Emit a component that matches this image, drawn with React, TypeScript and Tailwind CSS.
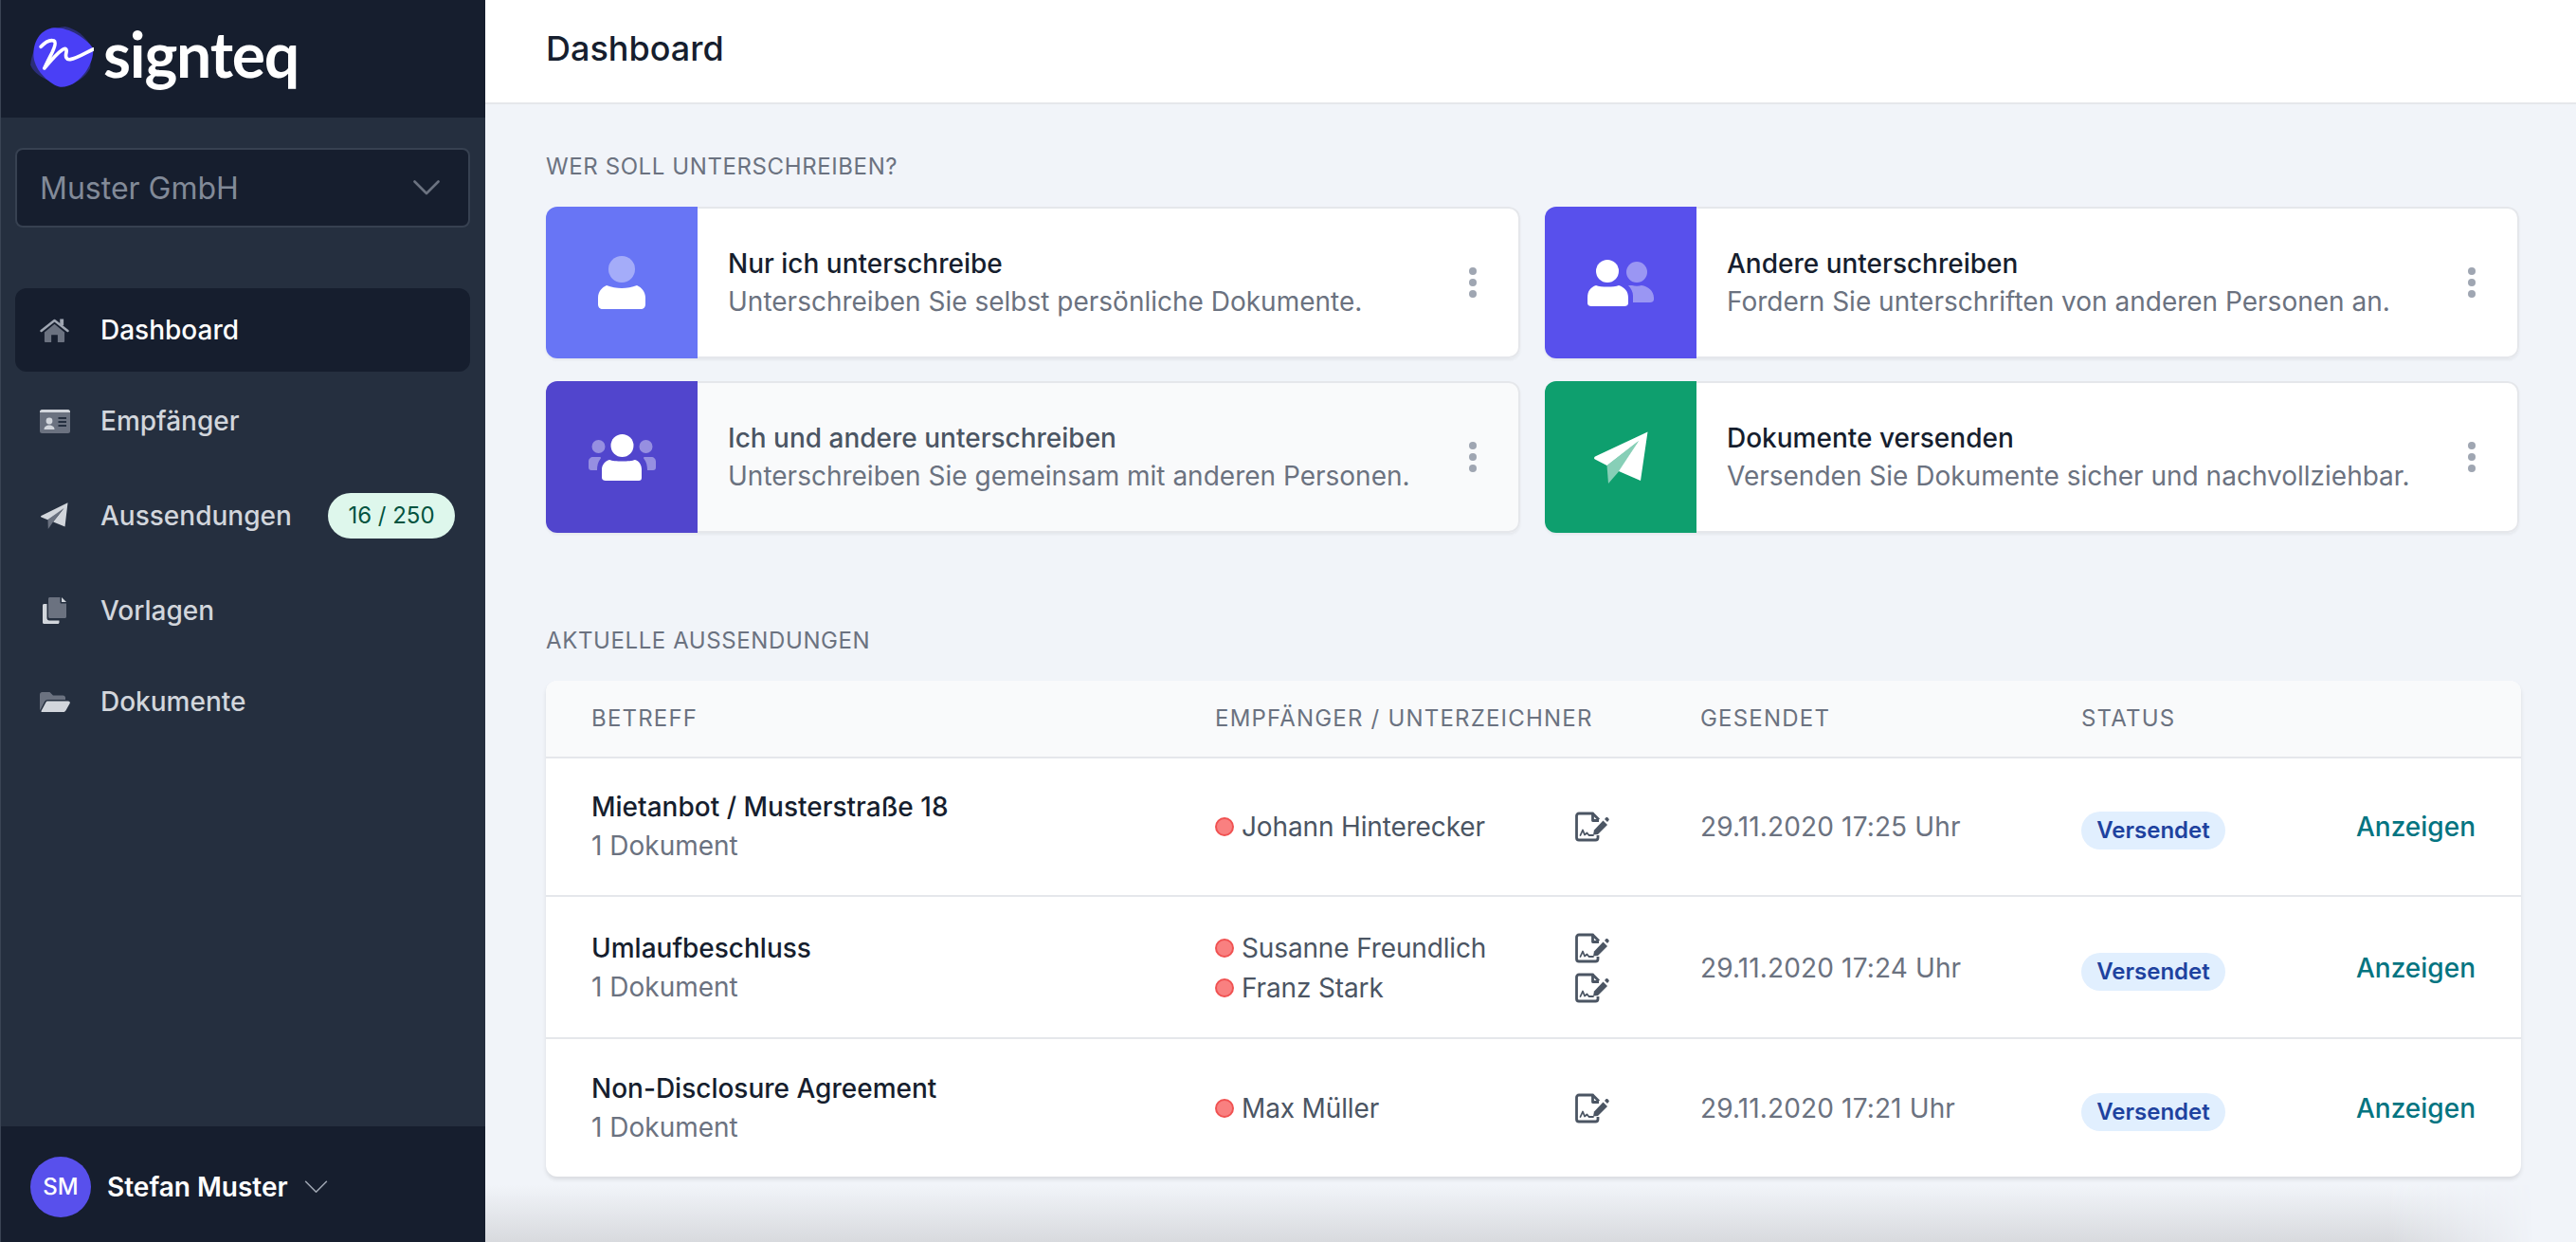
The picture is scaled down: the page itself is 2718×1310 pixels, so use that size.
import React from "react";

const font = { fontFamily: "Inter, 'Liberation Sans', sans-serif" };

function Logo() {
  return (
    <div className="flex items-center">
      <svg viewBox="96 84 200 192" className="w-[67px] h-[64px] shrink-0">
        <path d="M205 84C240 90 270 115 290 150L285 215C270 245 240 262 215 270C170 265 110 245 96 205C100 150 140 90 205 84Z" fill="#2b2d78" />
        <path d="M170 88C215 85 270 120 292 150C300 170 285 210 265 235C240 265 215 277 190 275C160 270 110 225 106 180C102 130 130 92 170 88Z" fill="#4a3ff6" />
        <path d="M129 148C142 134 158 125 170 129C178 133 172 150 165 165C156 183 147 200 140 216C160 192 178 170 196 158C208 150 212 156 209 168C206 180 210 190 222 188C245 184 272 166 294 156" fill="none" stroke="#fff" strokeWidth="11" strokeLinecap="round" strokeLinejoin="round" />
      </svg>
      <span className="ml-[10px] text-[66px] leading-none font-bold text-white tracking-[-0.018em] -mt-[6px]" style={{ fontFamily: "Lato, sans-serif" }}>
        signteq
      </span>
    </div>
  );
}

function HomeIcon() {
  return (
    <svg viewBox="0 0 32 26" className="w-[31px] h-[25px]">
      <path d="M1.5 13.5L16 2L30.5 13.5" fill="none" stroke="#9fa6b2" strokeWidth="2.6" strokeLinecap="round" strokeLinejoin="round" />
      <rect x="22" y="0.5" width="4" height="7" fill="#9fa6b2" />
      <path d="M5 15L16 6L27 15V25C27 25.6 26.6 26 26 26H19.5V18H12.5V26H6C5.4 26 5 25.6 5 25Z" fill="#6b7280" />
    </svg>
  );
}

function CardIcon() {
  return (
    <svg viewBox="0 0 32 25" className="w-[32px] h-[25px]">
      <rect width="32" height="25" rx="2.5" fill="#6b7280" />
      <path d="M2.5 0H29.5C30.9 0 32 1.1 32 2.5V3H0V2.5C0 1.1 1.1 0 2.5 0Z" fill="#d2d6dc" />
      <circle cx="10" cy="12" r="3.4" fill="#d2d6dc" />
      <path d="M4.5 21C4.5 18 7 16.5 10 16.5C13 16.5 15.5 18 15.5 21Z" fill="#d2d6dc" />
      <path d="M19.5 9H28M19.5 13H28M19.5 17H28" stroke="#252f3f" strokeWidth="1.8" />
    </svg>
  );
}

function PlaneIcon() {
  return (
    <svg viewBox="0 0 29 28" className="w-[29px] h-[28px] ml-[1px]">
      <path d="M7.5 18.2L24 6L13 20.5L7.8 28Z" fill="#6b7280" />
      <path d="M28.5 0.3L25.5 25.5L13.2 20.5L24.5 6L7.3 18.2L0.6 15.5C-0.1 15.2 -0.2 14.4 0.5 14Z" fill="#d2d6dc" />
    </svg>
  );
}

function CopyIcon() {
  return (
    <svg viewBox="0 0 25 28" className="w-[25px] h-[28px] ml-[3px]">
      <path d="M0 8.5C0 7.7 0.7 7 1.5 7H4.5V22C4.5 23.3 5.6 24.5 7 24.5H17.5V26.5C17.5 27.3 16.8 28 16 28H1.5C0.7 28 0 27.3 0 26.5Z" fill="#d2d6dc" />
      <path d="M7.5 0H18.5V5.5C18.5 6 19 6.5 19.5 6.5H25V20.5C25 21.3 24.3 22 23.5 22H7.5C6.7 22 6 21.3 6 20.5V1.5C6 0.7 6.7 0 7.5 0Z" fill="#6b7280" />
      <path d="M20 0L25 5H20Z" fill="#d2d6dc" />
    </svg>
  );
}

function FolderIcon() {
  return (
    <svg viewBox="0 0 32 21" className="w-[32px] h-[21px]">
      <path d="M0 2.5C0 1.1 1.1 0 2.5 0H10.5L14 3.5H24.5C25.9 3.5 27 4.6 27 6V8H8.5C7 8 5.8 8.8 5.1 10.1L0.5 19C0.2 18.7 0 18.2 0 17.7Z" fill="#6b7280" />
      <path d="M8.5 9.5H30C31.4 9.5 32.3 10.9 31.6 12.1L27.4 19.5C26.9 20.4 26 21 25 21H2C1 21 1.6 19.8 2 19L6.4 10.7C6.8 10 7.6 9.5 8.5 9.5Z" fill="#d2d6dc" />
    </svg>
  );
}

function Chevron({ className, stroke, width }: { className: string; stroke: string; width: number }) {
  return (
    <svg viewBox="0 0 28 16" className={className} fill="none">
      <path d="M1.5 1.5L14 14L26.5 1.5" stroke={stroke} strokeWidth={width} strokeLinecap="round" strokeLinejoin="round" />
    </svg>
  );
}

function DocSign() {
  return (
    <svg viewBox="0 0 36 32" className="w-[36px] h-[32px] shrink-0">
      <path d="M25 9.5H18.5V2H4C2.6 2 1.5 3.1 1.5 4.5V27.5C1.5 28.9 2.6 30 4 30H21.5C22.9 30 24 28.9 24 27.5V25" fill="none" stroke="#4b5563" strokeWidth="2.8" strokeLinejoin="round" />
      <path d="M18.5 2L25 8.5" fill="none" stroke="#4b5563" strokeWidth="2.8" />
      <path d="M5.5 25L8 19.5L10 24.5L12.5 22.5L14.5 25H19" fill="none" stroke="#4b5563" strokeWidth="1.8" strokeLinecap="round" strokeLinejoin="round" />
      <path d="M19 24.5L20 19.5L29.5 9.5L34 14L24 24Z" fill="#4b5563" />
      <path d="M31 8L32.5 6.3C33 5.8 33.8 5.8 34.3 6.3L35.4 7.4C35.9 7.9 35.9 8.7 35.4 9.2L34 11L31 8Z" fill="#4b5563" />
    </svg>
  );
}

function PersonIcon() {
  return (
    <svg viewBox="0 0 50 56" className="w-[50px] h-[56px]">
      <circle cx="25" cy="14" r="14" fill="#fff" fillOpacity="0.4" />
      <path d="M9 31C14 33 20 34 25 34C30 34 36 33 41 31C46 33 50 38 50 44V51C50 54 48 56 45 56H5C2 56 0 54 0 51V44C0 38 4 33 9 31Z" fill="#fff" />
    </svg>
  );
}

function TwoPeopleIcon() {
  return (
    <svg viewBox="0 0 70 49" className="w-[70px] h-[49px]">
      <circle cx="52" cy="13" r="11" fill="#fff" fillOpacity="0.4" />
      <path d="M47 27C50 28 54 28 57 27C64 28 70 33 70 40V42C70 44 68 45 66 45H48V38C48 34 46 30 43 27Z" fill="#fff" fillOpacity="0.4" />
      <circle cx="21" cy="12" r="12" fill="#fff" />
      <path d="M9 27C14 29 28 29 33 27C39 29 43 33 43 40V46C43 48 41 49 39 49H4C2 49 0 48 0 46V40C0 33 3 29 9 27Z" fill="#fff" />
    </svg>
  );
}

function GroupIcon() {
  return (
    <svg viewBox="0 0 71 49" className="w-[71px] h-[49px]">
      <circle cx="10.5" cy="13" r="7" fill="#fff" fillOpacity="0.4" />
      <circle cx="60.5" cy="13" r="7" fill="#fff" fillOpacity="0.4" />
      <path d="M5 24H12C13 24 13.5 25 12.5 26C10 29 9 33 9 38H3C1 38 0 37 0 35V29C0 26 2 24 5 24Z" fill="#fff" fillOpacity="0.4" />
      <path d="M66 24H59C58 24 57.5 25 58.5 26C61 29 62 33 62 38H68C70 38 71 37 71 35V29C71 26 69 24 66 24Z" fill="#fff" fillOpacity="0.4" />
      <circle cx="35.5" cy="12" r="12" fill="#fff" />
      <path d="M22 27C27 29 44 29 49 27C53 28 56 32 56 37V46C56 48 55 49 53 49H18C16 49 14 48 14 46V37C14 32 18 28 22 27Z" fill="#fff" />
    </svg>
  );
}

function SendIcon() {
  return (
    <svg viewBox="0 0 57 55" className="w-[57px] h-[55px]">
      <path d="M13.5 36L47 10L28 40L15 55L13.5 36Z" fill="#fff" fillOpacity="0.5" />
      <path d="M56.5 0.5L49 52L26 42L47 10L13.5 36L1 29.5C-0.3 28.8 -0.3 27.6 1 26.5Z" fill="#fff" />
    </svg>
  );
}

function Dots() {
  return (
    <div className="flex flex-col gap-[4px] w-[8px]">
      <div className="h-[8px] w-[8px] rounded-full bg-[#9fa6b2]" />
      <div className="h-[8px] w-[8px] rounded-full bg-[#9fa6b2]" />
      <div className="h-[8px] w-[8px] rounded-full bg-[#9fa6b2]" />
    </div>
  );
}

const nav = [
  { label: "Empfänger", icon: <CardIcon />, h: "h-[96px]" },
  { label: "Aussendungen", icon: <PlaneIcon />, h: "h-[104px]", badge: "16 / 250" },
  { label: "Vorlagen", icon: <CopyIcon />, h: "h-[96px]" },
  { label: "Dokumente", icon: <FolderIcon />, h: "h-[96px]" },
];

const cards = [
  { title: "Nur ich unterschreibe", desc: "Unterschreiben Sie selbst persönliche Dokumente.", color: "bg-[#6875f5]", icon: <PersonIcon /> },
  { title: "Andere unterschreiben", desc: "Fordern Sie unterschriften von anderen Personen an.", color: "bg-[#5850ec]", icon: <TwoPeopleIcon /> },
  { title: "Ich und andere unterschreiben", desc: "Unterschreiben Sie gemeinsam mit anderen Personen.", color: "bg-[#5145cd]", icon: <GroupIcon />, muted: true },
  { title: "Dokumente versenden", desc: "Versenden Sie Dokumente sicher und nachvollziehbar.", color: "bg-[#0e9f6e]", icon: <SendIcon /> },
];

const rows = [
  { subject: "Mietanbot / Musterstraße 18", names: ["Johann Hinterecker"], date: "29.11.2020 17:25 Uhr", h: "h-[146px]" },
  { subject: "Umlaufbeschluss", names: ["Susanne Freundlich", "Franz Stark"], date: "29.11.2020 17:24 Uhr", h: "h-[150px] pt-[2px]" },
  { subject: "Non-Disclosure Agreement", names: ["Max Müller"], date: "29.11.2020 17:21 Uhr", h: "h-[145px]" },
];

export default function App() {
  return (
    <div className="relative flex h-[1310px] w-[2718px] overflow-hidden bg-[#f1f4f9]" style={font}>
      <div className="absolute inset-y-0 left-0 w-px bg-[#3a4454]" />
      <aside className="flex w-[512px] shrink-0 flex-col bg-[#252f3f]">
        <div className="flex h-[124px] items-start bg-[#161e2e] pl-[32px] pt-[28px]">
          <Logo />
        </div>
        <div className="px-[16px] pt-[32px]">
          <div className="flex h-[84px] items-center justify-between rounded-[8px] border-2 border-[#374151] bg-[#161e2e] pl-[24px] pr-[30px]">
            <span className="mt-[2px] text-[32px] text-[#828a98]">Muster GmbH</span>
            <Chevron className="w-[28px] h-[16px]" stroke="#6b7280" width={2.6} />
          </div>
        </div>
        <nav className="flex flex-1 flex-col px-[16px] pt-[64px]">
          <div className="mb-[4px] flex h-[88px] items-center rounded-[12px] bg-[#161e2e] pl-[26px]">
            <span className="flex w-[64px] shrink-0"><HomeIcon /></span>
            <span className="text-[28px] font-[450] text-white">Dashboard</span>
          </div>
          {nav.map((item) => (
            <div key={item.label} className={`flex ${item.h} items-center pl-[26px] pr-[16px]`}>
              <span className="flex w-[64px] shrink-0 justify-start">{item.icon}</span>
              <span className="text-[28px] font-[450] text-[#d2d6dc]">{item.label}</span>
              {item.badge && (
                <span className="ml-auto flex h-[48px] w-[134px] items-center justify-center rounded-full bg-[#def7ec] text-[24px] text-[#03543f]">
                  {item.badge}
                </span>
              )}
            </div>
          ))}
        </nav>
        <div className="flex h-[122px] items-center bg-[#161e2e] pl-[32px] pt-[6px]">
          <div className="flex h-[64px] w-[64px] items-center justify-center rounded-full bg-[#5850ec] text-[24px] font-medium text-white">SM</div>
          <span className="ml-[17px] text-[28px] font-semibold text-white">Stefan Muster</span>
          <Chevron className="ml-[17px] w-[25px] h-[14px]" stroke="#9fa6b2" width={1.8} />
        </div>
      </aside>

      <main className="flex min-w-0 flex-1 flex-col">
        <header className="flex h-[110px] shrink-0 items-center border-b-2 border-[#e5e7eb] bg-white pl-[64px]">
          <h1 className="-mt-[6px] text-[36px] font-[450] text-[#161e2e]">Dashboard</h1>
        </header>
        <div className="pl-[64px] pr-[58px]">
          <h2 className="mt-[50px] text-[24px] leading-[32px] tracking-[0.025em] text-[#6b7280]">WER SOLL UNTERSCHREIBEN?</h2>
          <div className="mt-[26px] grid grid-cols-2 gap-x-[26px] gap-y-[24px] pr-[2px]">
            {cards.map((card) => (
              <div key={card.title} className="flex h-[160px] overflow-hidden rounded-[12px] shadow-[0_2px_3px_rgba(0,0,0,0.05)]">
                <div className={`flex w-[160px] shrink-0 items-center justify-center ${card.color}`}>{card.icon}</div>
                <div className={`flex flex-1 items-center justify-between rounded-r-[12px] border-2 border-l-0 border-[#e5e7eb] pl-[32px] pr-[44px] ${card.muted ? "bg-[#f9fafb]" : "bg-white"}`}>
                  <div className="flex flex-col">
                    <span className={`text-[28px] leading-[40px] font-[450] ${card.muted ? "text-[#4b5563]" : "text-[#161e2e]"}`}>{card.title}</span>
                    <span className="text-[28px] leading-[40px] text-[#6b7280]">{card.desc}</span>
                  </div>
                  <Dots />
                </div>
              </div>
            ))}
          </div>

          <h2 className="mt-[98px] text-[24px] leading-[32px] tracking-[0.025em] text-[#6b7280]">AKTUELLE AUSSENDUNGEN</h2>
          <div className="mt-[26px] overflow-hidden rounded-[12px] bg-white shadow-[0_3px_4px_rgba(0,0,0,0.1)]">
            <div className="grid h-[82px] grid-cols-[706px_512px_402px_1fr] items-center border-b-2 border-[#e5e7eb] bg-[#f9fafb] text-[24px] tracking-[0.05em] text-[#6b7280]">
              <span className="pl-[48px]">BETREFF</span>
              <span>EMPFÄNGER / UNTERZEICHNER</span>
              <span>GESENDET</span>
              <span>STATUS</span>
            </div>
            {rows.map((row, i) => (
              <div key={row.subject} className={`grid ${row.h} grid-cols-[706px_512px_402px_1fr] items-center ${i < rows.length - 1 ? "border-b-2 border-[#e5e7eb]" : ""}`}>
                <div className="flex flex-col pl-[48px]">
                  <span className="text-[28px] leading-[41px] font-[450] text-[#161e2e]">{row.subject}</span>
                  <span className="text-[28px] leading-[41px] text-[#6b7280]">1 Dokument</span>
                </div>
                <div className="flex flex-col pr-[96px]">
                  {row.names.map((name) => (
                    <div key={name} className="flex h-[42px] items-center justify-between">
                      <div className="flex items-center">
                        <span className="h-[20px] w-[20px] rounded-full border-2 border-[#f05252] bg-[#f98080]" />
                        <span className="ml-[8px] text-[28px] tracking-[-0.005em] text-[#4b5563]">{name}</span>
                      </div>
                      <DocSign />
                    </div>
                  ))}
                </div>
                <span className="text-[28px] tracking-[0.005em] text-[#6b7280]">{row.date}</span>
                <div className="flex items-center justify-between pr-[48px]">
                  <span className="mt-[8px] flex h-[40px] w-[152px] items-center justify-center rounded-full bg-[#e1effe] text-[24px] font-semibold text-[#1e429f]">Versendet</span>
                  <span className="text-[28px] font-[450] text-[#047481]">Anzeigen</span>
                </div>
              </div>
            ))}
          </div>
        </div>
        <div className="mt-auto h-[60px] bg-gradient-to-b from-[#f1f4f9] to-[#d8dade] [mask-image:linear-gradient(to_right,black_91%,transparent_98%)]" />
      </main>
    </div>
  );
}
